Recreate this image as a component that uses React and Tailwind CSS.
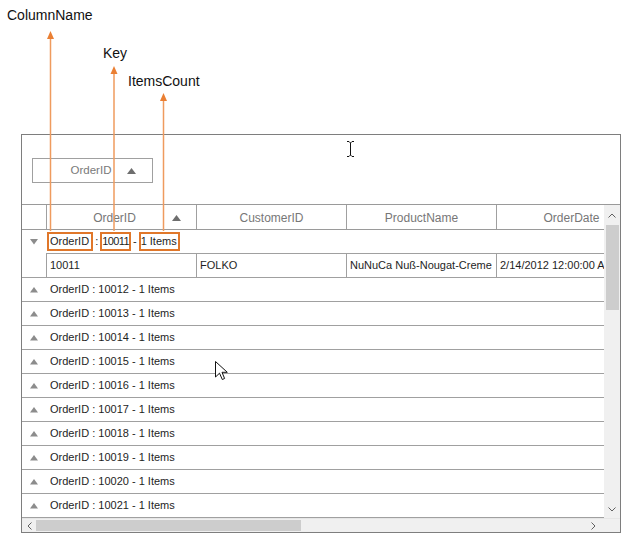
import React from "react";

const Tri = ({ down }) => (
  <svg width="8" height="6" viewBox="0 0 8 6">
    <path d={down ? "M0 0 L8 0 L4 5.5 Z" : "M0 5.5 L8 5.5 L4 0 Z"} fill="#8c8c8c" />
  </svg>
);

const SortUp = () => (
  <svg width="9" height="6" viewBox="0 0 9 6">
    <path d="M0 6 L9 6 L4.5 0 Z" fill="#6e6e6e" />
  </svg>
);

const GroupRow = ({ id }) => (
  <div className="h-[24px] shrink-0 flex items-center border-b border-[#a0a0a0]">
    <div className="w-[25px] flex justify-center pr-[2px]">
      <Tri />
    </div>
    <div className="pl-[3px] text-[11px] text-[#1e1e1e] whitespace-nowrap">
      OrderID : {id} - 1 Items
    </div>
  </div>
);

export default function App() {
  const ids = [10012, 10013, 10014, 10015, 10016, 10017, 10018, 10019, 10020, 10021];
  const headers = ["OrderID", "CustomerID", "ProductName", "OrderDate"];
  const cells = ["10011", "FOLKO", "NuNuCa Nuß-Nougat-Creme", "2/14/2012 12:00:00 AM"];
  return (
    <div className="relative w-[627px] h-[538px] bg-white overflow-hidden font-['Liberation_Sans',Arial,sans-serif]">
      <div className="pt-[134px] pl-[21px]">
        <div className="w-[600px] h-[399px] border border-[#7e7e7e] flex flex-col">
          {/* group drop area */}
          <div className="h-[70px] shrink-0 border-b border-[#9a9a9a] pl-[10px] pt-[23px]">
            <div className="w-[121px] h-[25px] border border-[#a0a0a0] flex items-center">
              <div className="w-[90px] text-center text-[11.5px] text-[#7a7a7a] pl-[26px]">OrderID</div>
              <div className="pl-[4px] flex items-center">
                <SortUp />
              </div>
            </div>
          </div>
          {/* middle */}
          <div className="h-[313px] shrink-0 flex">
            <div className="flex-1 overflow-hidden flex flex-col">
              {/* header */}
              <div className="h-[25px] shrink-0 flex border-b border-[#9a9a9a]">
                <div className="w-[25px] shrink-0 border-r border-[#a0a0a0]" />
                {headers.map((h, i) => (
                  <div
                    key={h}
                    className="w-[150px] shrink-0 border-r border-[#a0a0a0] flex items-center pt-[1px] text-[12px] text-[#777777]"
                  >
                    {i === 0 ? (
                      <>
                        <div className="flex-1 text-center pl-[14px]">{h}</div>
                        <div className="w-[28px] flex items-center pl-[4px]">
                          <SortUp />
                        </div>
                      </>
                    ) : (
                      <div className="flex-1 text-center">{h}</div>
                    )}
                  </div>
                ))}
              </div>
              {/* expanded group */}
              <div className="h-[23px] shrink-0 flex items-center">
                <div className="w-[25px] flex justify-center pr-[2px] pt-[1px]">
                  <Tri down />
                </div>
                <div className="flex items-center text-[11px] text-[#1e1e1e] whitespace-nowrap">
                  <span className="border-2 border-[#e0772a] pl-[1px] pr-[2px] leading-[15px]">OrderID</span>
                  <span className="mx-[2px]">:</span>
                  <span className="border-2 border-[#e0772a] leading-[15px] tracking-[-0.6px]">10011</span>
                  <span className="mx-[2px]">-</span>
                  <span className="border-2 border-[#e0772a] leading-[15px] pr-[1px]">1 Items</span>
                </div>
              </div>
              {/* data row */}
              <div className="h-[25px] shrink-0 flex border-b border-[#a0a0a0]">
                <div className="w-[24px] shrink-0" />
                <div className="flex border-t border-l border-[#a0a0a0] h-full">
                  {cells.map((c) => (
                    <div
                      key={c}
                      className="w-[150px] shrink-0 border-r border-[#a0a0a0] pl-[3px] flex items-center text-[11px] text-[#1e1e1e] whitespace-nowrap overflow-hidden"
                    >
                      {c}
                    </div>
                  ))}
                </div>
              </div>
              {ids.map((id) => (
                <GroupRow key={id} id={id} />
              ))}
            </div>
            {/* vertical scrollbar */}
            <div className="w-[16px] shrink-0 bg-[#f0f0f0] flex flex-col">
              <div className="h-[20px] shrink-0 flex items-center justify-center">
                <svg width="8" height="5" viewBox="0 0 8 5">
                  <path d="M0.5 4.5 L4 1 L7.5 4.5" fill="none" stroke="#606060" strokeWidth="1" />
                </svg>
              </div>
              <div className="h-[85px] shrink-0 ml-[2px] mr-[1px] bg-[#cdcdcd]" />
              <div className="flex-1" />
              <div className="h-[18px] shrink-0 flex items-center justify-center">
                <svg width="8" height="5" viewBox="0 0 8 5">
                  <path d="M0.5 0.5 L4 4 L7.5 0.5" fill="none" stroke="#606060" strokeWidth="1" />
                </svg>
              </div>
            </div>
          </div>
          {/* horizontal scrollbar */}
          <div className="h-[14px] shrink-0 flex bg-[#f0f0f0] border-t border-[#e6e6e6]">
            <div className="w-[14px] shrink-0 flex items-center justify-center">
              <svg width="5" height="8" viewBox="0 0 5 8">
                <path d="M4.5 0.5 L1 4 L4.5 7.5" fill="none" stroke="#606060" strokeWidth="1" />
              </svg>
            </div>
            <div className="w-[265px] shrink-0 my-[1px] bg-[#cdcdcd]" />
            <div className="flex-1" />
            <div className="w-[14px] shrink-0 flex items-center justify-center">
              <svg width="5" height="8" viewBox="0 0 5 8">
                <path d="M0.5 0.5 L4 4 L0.5 7.5" fill="none" stroke="#606060" strokeWidth="1" />
              </svg>
            </div>
            <div className="w-[20px] shrink-0" />
          </div>
        </div>
      </div>

      {/* annotation labels */}
      <div className="absolute left-[7px] top-[6px] text-[14px] leading-[18px] text-[#111]">ColumnName</div>
      <div className="absolute left-[103px] top-[44px] text-[14px] leading-[18px] text-[#111]">Key</div>
      <div className="absolute left-[128px] top-[72px] text-[14px] leading-[18px] text-[#111]">ItemsCount</div>

      {/* annotation arrows and cursors */}
      <svg className="absolute left-0 top-0 pointer-events-none" width="627" height="538" viewBox="0 0 627 538">
        <line x1="50.5" y1="37" x2="50.5" y2="231" stroke="#ef9b5e" strokeWidth="1.5" />
        <path d="M47 39 L54 39 L50.5 31 Z" fill="#ea7f33" />
        <line x1="114" y1="72" x2="114" y2="231" stroke="#ef9b5e" strokeWidth="1.5" />
        <path d="M110.5 74 L117.5 74 L114 66 Z" fill="#ea7f33" />
        <line x1="163.5" y1="99" x2="163.5" y2="231" stroke="#ef9b5e" strokeWidth="1.5" />
        <path d="M160 101 L167 101 L163.5 93 Z" fill="#ea7f33" />

        {/* I-beam cursor */}
        <path d="M347 141.5 L349 141.5 L350.5 143 L352 141.5 L354 141.5 M350.5 143 L350.5 155 M347 156.5 L349 156.5 L350.5 155 L352 156.5 L354 156.5" fill="none" stroke="#111" strokeWidth="1" />

        {/* arrow cursor */}
        <path d="M215.5 361.5 L215.5 377 L219.5 373.2 L222.3 379.5 L224.6 378.5 L222 372.3 L227.3 372.3 Z" fill="#fff" stroke="#111" strokeWidth="1" strokeLinejoin="round" />
      </svg>
    </div>
  );
}
